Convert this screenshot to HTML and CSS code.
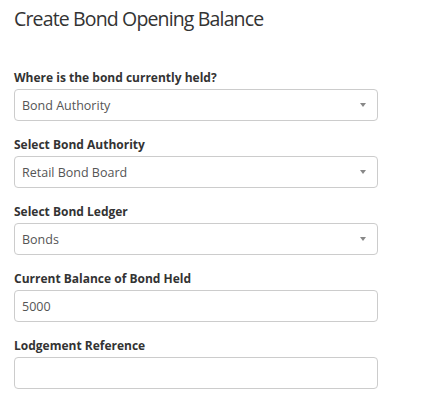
FILE: index.html
```html
<!DOCTYPE html>
<html>
<head>
<meta charset="utf-8">
<link rel="stylesheet" href="styles.css">
</head>
<body>
<div class="page">
  <h3 class="title">Create Bond Opening Balance</h3>
  <form class="form">
    <div class="group">
      <label class="label">Where is the bond currently held?</label>
      <div class="control select"><span class="value">Bond Authority</span><span class="arrow"></span></div>
    </div>
    <div class="group">
      <label class="label">Select Bond Authority</label>
      <div class="control select"><span class="value">Retail Bond Board</span><span class="arrow"></span></div>
    </div>
    <div class="group">
      <label class="label">Select Bond Ledger</label>
      <div class="control select"><span class="value">Bonds</span><span class="arrow"></span></div>
    </div>
    <div class="group">
      <label class="label">Current Balance of Bond Held</label>
      <div class="control"><span class="value">5000</span></div>
    </div>
    <div class="group">
      <label class="label">Lodgement Reference</label>
      <div class="control"><span class="value"></span></div>
    </div>
  </form>
</div>
</body>
</html>
```
FILE: styles.css
```css
* { box-sizing: border-box; }
html, body { margin: 0; padding: 0; background: #fff; }
body {
  font-family: "Open Sans", "Liberation Sans", sans-serif;
  color: #333;
}
.page {
  width: 378px;
  padding: 8px 0 0 14px;
}
.title {
  margin: 0;
  font-size: 19.5px;
  line-height: 22px;
  font-weight: 400;
  letter-spacing: -0.85px;
  color: #333;
}
.form {
  margin-top: 39px;
  display: flex;
  flex-direction: column;
}
.group {
  display: flex;
  flex-direction: column;
  margin-bottom: 15px;
}
.label {
  font-size: 12px;
  line-height: 17px;
  font-weight: 700;
  margin-bottom: 3px;
  color: #333;
}
.control {
  height: 32px;
  border: 1px solid #ccc;
  border-radius: 4px;
  display: flex;
  align-items: center;
  padding: 0 7px;
  font-size: 12.5px;
  color: #555;
}
.value { flex: 1; }
.arrow {
  width: 0;
  height: 0;
  border-left: 3px solid transparent;
  border-right: 3px solid transparent;
  border-top: 4px solid #888;
  margin-right: 4px;
}
```
